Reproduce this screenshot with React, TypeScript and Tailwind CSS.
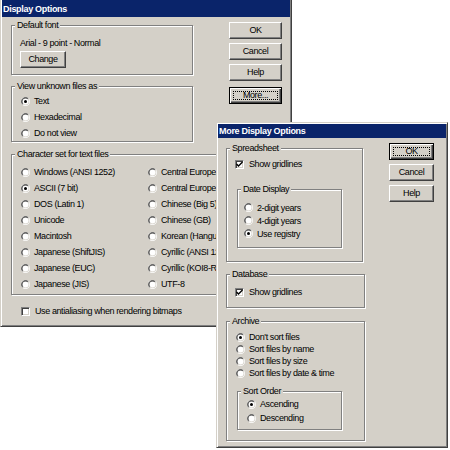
import type { ReactNode } from 'react';

function Radio({ checked = false, label }: { checked?: boolean; label: string }) {
    return (
        <div className="flex items-center gap-[4px] whitespace-nowrap">
            <svg width="9" height="9" viewBox="0 0 12 12" className="shrink-0">
                <circle cx="6" cy="6" r="6" fill="#ffffff" />
                <path d="M1.76 10.24 A6 6 0 0 1 10.24 1.76 Z" fill="#808080" />
                <circle cx="6" cy="6" r="5" fill="#d4d0c8" />
                <path d="M2.46 9.54 A5 5 0 0 1 9.54 2.46 Z" fill="#404040" />
                <circle cx="6" cy="6" r="4" fill="#ffffff" />
                {checked && <circle cx="6" cy="6" r="2" fill="#000000" />}
            </svg>
            <span>{label}</span>
        </div>
    );
}

function Check({ checked = false, label }: { checked?: boolean; label: string }) {
    return (
        <div className="flex items-center gap-[5px] whitespace-nowrap">
            <div className="w-[9px] h-[9px] shrink-0 bg-white border border-t-[#808080] border-l-[#808080] border-b-white border-r-white shadow-[inset_1px_1px_0_#404040,inset_-1px_-1px_0_#d4d0c8] flex items-center justify-center">
                {checked && (
                    <svg width="7" height="7" viewBox="0 0 7 7">
                        <path d="M0.5 3 L2.5 5 L6.5 1" stroke="#000" strokeWidth="1.4" fill="none" />
                    </svg>
                )}
            </div>
            <span>{label}</span>
        </div>
    );
}

function Group({ label, className, children }: { label: string; className?: string; children: ReactNode }) {
    return (
        <div className={`relative border border-[#808080] shadow-[1px_1px_0_#ffffff,inset_1px_1px_0_#ffffff] ${className ?? ''}`}>
            <span className="absolute left-[3px] top-[-7px] px-[2px] bg-[#d4d0c8] leading-[12px] whitespace-nowrap">
                {label}
            </span>
            {children}
        </div>
    );
}

function Btn({ children, def = false, className }: { children: ReactNode; def?: boolean; className?: string }) {
    if (def) {
        return (
            <div className={`relative h-[17px] flex items-center justify-center border border-black shadow-[inset_1px_1px_0_#ffffff,inset_-1px_-1px_0_#404040,inset_-2px_-2px_0_#808080] ${className ?? ''}`}>
                <span className="absolute inset-[3px] border border-dotted border-black" />
                <span className="leading-none">{children}</span>
            </div>
        );
    }
    return (
        <div className={`h-[17px] flex items-center justify-center border border-t-white border-l-white border-b-[#404040] border-r-[#404040] shadow-[inset_-1px_-1px_0_#808080] ${className ?? ''}`}>
            <span className="leading-none">{children}</span>
        </div>
    );
}

function Win({ title, titleH, className, children }: { title: string; titleH: string; className: string; children: ReactNode }) {
    return (
        <div className={`absolute flex flex-col p-[1px] bg-[#d4d0c8] border border-t-[#d4d0c8] border-l-[#d4d0c8] border-b-[#404040] border-r-[#404040] shadow-[inset_1px_1px_0_#ffffff,inset_-1px_-1px_0_#808080] ${className}`}>
            <div className={`${titleH} shrink-0 bg-[#0a246a] text-white font-bold tracking-[-0.3px] pl-[1px] flex items-center`}>
                {title}
            </div>
            {children}
        </div>
    );
}

export default function App() {
    return (
        <div className="relative w-[450px] h-[450px] overflow-hidden bg-white text-black text-[9px] leading-[12px] tracking-[-0.4px] font-['Liberation_Sans',Arial,sans-serif]">
            {/* Display Options */}
            <Win title="Display Options" titleH="h-[17px]" className="left-0 top-[-2px] w-[292px] h-[329px]">
                <div className="flex flex-col">
                    <div className="flex">
                        <div className="ml-[9px] pt-[8px] w-[182px] flex flex-col">
                            <Group label="Default font" className="pl-[8px] pt-[11px] pb-[6px]">
                                <div className="h-[12px]">Arial - 9 point - Normal</div>
                                <Btn className="mt-[2px] w-[46px]">Change</Btn>
                            </Group>
                            <Group label="View unknown files as" className="mt-[11px] pl-[9px] pt-[6px]">
                                <div className="h-[16px] flex items-center"><Radio checked label="Text" /></div>
                                <div className="h-[16px] flex items-center"><Radio label="Hexadecimal" /></div>
                                <div className="h-[16px] flex items-center"><Radio label="Do not view" /></div>
                            </Group>
                        </div>
                        <div className="ml-[36px] pt-[5px] w-[53px] flex flex-col gap-[4px]">
                            <Btn>OK</Btn>
                            <Btn>Cancel</Btn>
                            <Btn>Help</Btn>
                            <Btn def className="mt-[2px]">More...</Btn>
                        </div>
                    </div>
                    <Group label="Character set for text files" className="ml-[9px] mt-[12px] w-[272px] pl-[9px] pt-[9px] pb-[2px]">
                        <div className="grid grid-cols-[127px_1fr] grid-flow-col grid-rows-8">
                            {[
                                ['Windows (ANSI 1252)', false],
                                ['ASCII (7 bit)', true],
                                ['DOS (Latin 1)', false],
                                ['Unicode', false],
                                ['Macintosh', false],
                                ['Japanese (ShiftJIS)', false],
                                ['Japanese (EUC)', false],
                                ['Japanese (JIS)', false],
                                ['Central European (ISO)', false],
                                ['Central European (Windows)', false],
                                ['Chinese (Big 5)', false],
                                ['Chinese (GB)', false],
                                ['Korean (Hangul)', false],
                                ['Cyrillic (ANSI 1251)', false],
                                ['Cyrillic (KOI8-R)', false],
                                ['UTF-8', false],
                            ].map(([label, on]) => (
                                <div key={label as string} className="h-[16px] flex items-center">
                                    <Radio checked={on as boolean} label={label as string} />
                                </div>
                            ))}
                        </div>
                    </Group>
                    <div className="ml-[19px] mt-[10px] h-[12px] flex items-center">
                        <Check label="Use antialiasing when rendering bitmaps" />
                    </div>
                </div>
            </Win>

            {/* More Display Options */}
            <Win title="More Display Options" titleH="h-[14px]" className="left-[216px] top-[122px] w-[232px] h-[326px]">
                <div className="flex">
                    <div className="ml-[8px] pt-[10px] flex flex-col">
                        <Group label="Spreadsheet" className="w-[137px] pl-[8px] pt-[9px] pb-[13px]">
                            <div className="h-[12px] flex items-center"><Check checked label="Show gridlines" /></div>
                            <Group label="Date Display" className="ml-[2px] mt-[19px] w-[105px] pl-[6px] pt-[11px] pb-[7px]">
                                <div className="h-[13px] flex items-center"><Radio label="2-digit years" /></div>
                                <div className="h-[13px] flex items-center"><Radio label="4-digit years" /></div>
                                <div className="h-[13px] flex items-center"><Radio checked label="Use registry" /></div>
                            </Group>
                        </Group>
                        <Group label="Database" className="mt-[12px] w-[139px] pl-[8px] pt-[11px] pb-[9px]">
                            <div className="h-[12px] flex items-center"><Check checked label="Show gridlines" /></div>
                        </Group>
                        <Group label="Archive" className="mt-[13px] w-[139px] pl-[9px] pt-[9px] pb-[10px]">
                            <div className="h-[12px] flex items-center"><Radio checked label="Don't sort files" /></div>
                            <div className="h-[12px] flex items-center"><Radio label="Sort files by name" /></div>
                            <div className="h-[12px] flex items-center"><Radio label="Sort files by size" /></div>
                            <div className="h-[12px] flex items-center"><Radio label="Sort files by date & time" /></div>
                            <Group label="Sort Order" className="ml-[1px] mt-[12px] w-[105px] pl-[9px] pt-[5px] pb-[4px]">
                                <div className="h-[14px] flex items-center"><Radio checked label="Ascending" /></div>
                                <div className="h-[14px] flex items-center"><Radio label="Descending" /></div>
                            </Group>
                        </Group>
                    </div>
                    <div className="ml-[24px] pt-[5px] w-[45px] flex flex-col gap-[4px]">
                        <Btn def>OK</Btn>
                        <Btn>Cancel</Btn>
                        <Btn>Help</Btn>
                    </div>
                </div>
            </Win>
        </div>
    );
}
